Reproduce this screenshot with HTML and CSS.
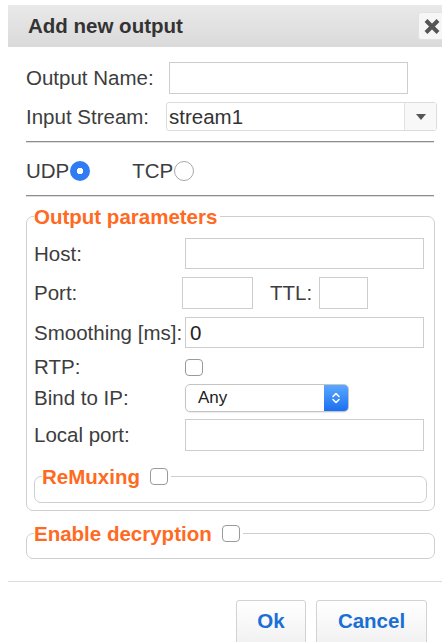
FILE: index.html
```html
<!DOCTYPE html>
<html lang="en">
<head>
<meta charset="utf-8">
<title>Add new output</title>
<link rel="stylesheet" href="styles.css">
</head>
<body>
<div class="dialog">
  <div class="titlebar">
    <span class="title">Add new output</span>
    <button class="close" type="button" aria-label="Close">
      <svg width="16" height="15" viewBox="0 0 16 15"><path d="M2 1.5 L14 13.5 M14 1.5 L2 13.5" stroke="#555" stroke-width="4" fill="none"/></svg>
    </button>
  </div>

  <div class="content">
    <div class="row row-name">
      <label class="lbl lbl-name">Output Name:</label>
      <input class="text name-input" type="text">
    </div>
    <div class="row row-stream">
      <label class="lbl lbl-stream">Input Stream:</label>
      <div class="combo">
        <span class="combo-value">stream1</span>
        <span class="combo-arrow"><svg width="10" height="6" viewBox="0 0 10 6"><path d="M0 0 H10 L5 6 Z" fill="#555"/></svg></span>
      </div>
    </div>

    <div class="rule"></div>

    <div class="row proto">
      <span class="proto-item">UDP<span class="radio checked"></span></span>
      <span class="proto-item tcp">TCP<span class="radio"></span></span>
    </div>

    <div class="rule rule-2"></div>

    <fieldset class="group params">
      <legend>Output parameters</legend>
      <div class="row r-host">
        <label class="lbl lbl-wide">Host:</label>
        <input class="text wide" type="text">
      </div>
      <div class="row r-port">
        <label class="lbl lbl-port">Port:</label>
        <input class="text port" type="text">
        <label class="lbl lbl-ttl">TTL:</label>
        <input class="text ttl" type="text">
      </div>
      <div class="row r-smooth">
        <label class="lbl lbl-smooth">Smoothing [ms]:</label>
        <input class="text wide" type="text" value="0">
      </div>
      <div class="row r-rtp">
        <label class="lbl lbl-wide">RTP:</label>
        <span class="check"></span>
      </div>
      <div class="row r-bind">
        <label class="lbl lbl-wide">Bind to IP:</label>
        <div class="popup">
          <span class="popup-value">Any</span>
          <span class="popup-btn"><svg width="10" height="14" viewBox="0 0 10 14"><path d="M2 5.5 L5 2.5 L8 5.5 M2 8.5 L5 11.5 L8 8.5" stroke="#fff" stroke-width="1.6" fill="none" stroke-linecap="round" stroke-linejoin="round"/></svg></span>
        </div>
      </div>
      <div class="row r-local">
        <label class="lbl lbl-wide">Local port:</label>
        <input class="text wide" type="text">
      </div>

      <fieldset class="group sub remux">
        <legend>ReMuxing <span class="check"></span></legend>
      </fieldset>
    </fieldset>

    <fieldset class="group decrypt">
      <legend>Enable decryption <span class="check"></span></legend>
    </fieldset>
  </div>

  <div class="footer">
    <button class="btn btn-ok" type="button">Ok</button>
    <button class="btn btn-cancel" type="button">Cancel</button>
  </div>
</div>
</body>
</html>
```

FILE: styles.css
```css
html, body {
  margin: 0;
  padding: 0;
  overflow: hidden;
  background: #fff;
}

body {
  font-family: "Liberation Sans", Arial, Helvetica, sans-serif;
  font-size: 20.5px;
  color: #3d3d3d;
}

.dialog {
  margin: 5px 0 0 8px;
  width: 440px;
}

/* title bar */
.titlebar {
  height: 42px;
  display: flex;
  align-items: center;
  justify-content: space-between;
  padding-left: 20px;
  background: linear-gradient(#e9e9e9, #dadada);
  box-sizing: border-box;
}

.title {
  font-weight: bold;
  font-size: 20.5px;
  color: #333;
}

.close {
  width: 28px;
  height: 28px;
  margin-right: 2px;
  padding: 0;
  border: 1px solid #e2e2e2;
  border-radius: 3px;
  background: #f6f6f6;
  display: flex;
  align-items: center;
  justify-content: center;
}

/* form body */
.content {
  padding-left: 18px;
}

.row {
  display: flex;
  align-items: center;
}

.lbl {
  flex: none;
  white-space: nowrap;
}

.text {
  box-sizing: border-box;
  border: 1px solid #cdcdcd;
  border-radius: 0;
  padding: 0 4px;
  font-family: inherit;
  font-size: 20.5px;
  color: #222;
  background: #fff;
  outline: none;
}

.row-name {
  margin-top: 15px;
  height: 32px;
}
.lbl-name { width: 143px; }
.name-input { width: 239px; height: 32px; }

.row-stream {
  margin-top: 8px;
  height: 29px;
}
.lbl-stream { width: 140px; }

.combo {
  box-sizing: border-box;
  width: 271px;
  height: 29px;
  border: 1px solid #dcdcdc;
  border-radius: 3px;
  display: flex;
  align-items: center;
}
.combo-value {
  flex: 1;
  padding-left: 2px;
  color: #333;
}
.combo-arrow {
  width: 31px;
  height: 100%;
  border-left: 1px solid #e2e2e2;
  background: #f8f8f8;
  display: flex;
  align-items: center;
  justify-content: center;
}

.rule {
  width: 408px;
  height: 0;
  margin-top: 10px;
  border-top: 1px solid #8c8c8c;
  border-bottom: 1px solid #dedede;
}

.proto {
  margin-top: 17px;
  height: 22px;
}
.proto-item {
  display: flex;
  align-items: center;
}
.proto-item.tcp {
  margin-left: 42px;
}

.radio {
  box-sizing: border-box;
  width: 20px;
  height: 20px;
  margin-left: 1px;
  border-radius: 50%;
  border: 1px solid #a8a8a8;
  background: #fff;
}
.radio.checked {
  border: none;
  background: radial-gradient(circle, #fff 0 3px, #2f7cf3 3.5px);
}

.rule-2 {
  margin-top: 13px;
}

/* fieldsets */
.group {
  margin: 0;
  border: 1px solid #cfcfcf;
  border-radius: 7px;
  min-width: 0;
}
.group legend {
  padding: 0 3px 0 0;
  line-height: 23px;
  font-weight: bold;
  font-size: 20.5px;
  color: #ff6a22;
  display: flex;
  align-items: center;
}

.params {
  width: 409px;
  box-sizing: border-box;
  margin-top: 8px;
  padding: 0 7px 7px 7px;
}

.r-host { margin-top: 10px; height: 31px; }
.r-port { margin-top: 8px; height: 32px; }
.r-smooth { margin-top: 8px; height: 31px; }
.r-rtp { margin-top: 10px; height: 18px; }
.r-bind { margin-top: 8px; height: 28px; }
.r-local { margin-top: 7px; height: 32px; }

.lbl-wide { width: 151px; }
.lbl-smooth { width: 151px; }
.wide { width: 239px; height: 100%; }
.lbl-port { width: 148px; }
.port { width: 71px; height: 100%; }
.lbl-ttl { margin-left: 17px; width: 49px; }
.ttl { width: 49px; height: 100%; }

.check {
  box-sizing: border-box;
  display: inline-block;
  width: 18px;
  height: 17px;
  border: 1px solid #9a9a9a;
  border-radius: 4px;
  background: #fff;
}

.popup {
  box-sizing: border-box;
  width: 164px;
  height: 28px;
  border: 1px solid #c4c4c4;
  border-radius: 5px;
  display: flex;
  align-items: center;
  overflow: hidden;
  box-shadow: 0 1px 1px rgba(0, 0, 0, 0.08);
}
.popup-value {
  flex: 1;
  padding-left: 12px;
  font-size: 17px;
  color: #222;
}
.popup-btn {
  width: 24px;
  height: 100%;
  background: linear-gradient(#5aa8ff, #1b6ff0);
  display: flex;
  align-items: center;
  justify-content: center;
}

.sub {
  margin-top: 14px;
  padding: 0 7px 14px 7px;
}
.group legend .check {
  margin-left: 10px;
}

.decrypt {
  width: 409px;
  box-sizing: border-box;
  margin-top: 11px;
  padding: 0 7px 13px 7px;
}

/* footer */
.footer {
  margin-top: 22px;
  border-top: 1px solid #dcdcdc;
  padding-top: 18px;
  display: flex;
  justify-content: flex-end;
  padding-right: 21px;
  gap: 10px;
}

.btn {
  box-sizing: border-box;
  height: 46px;
  padding: 0 0 4px;
  border: 1px solid #d2d2d2;
  border-radius: 3px;
  background: linear-gradient(#ffffff, #f1f1f1);
  font-family: inherit;
  font-weight: bold;
  font-size: 20.5px;
  color: #1a6fd6;
}
.btn-ok { width: 70px; }
.btn-cancel { width: 111px; }
```
